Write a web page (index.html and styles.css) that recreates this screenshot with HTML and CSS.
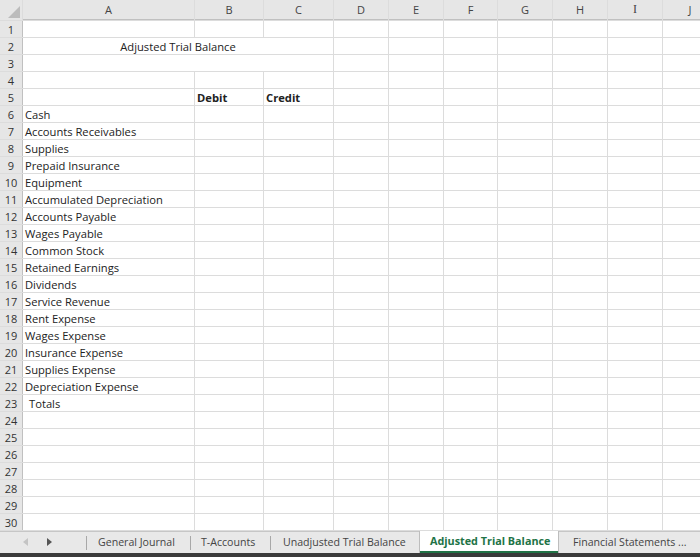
FILE: index.html
```html
<!DOCTYPE html>
<html>
<head>
<meta charset="utf-8">
<link rel="stylesheet" href="styles.css">
</head>
<body>
<div class="app">
  <div class="sheet">
    <div class="corner"><svg width="12" height="12" viewBox="0 0 12 12"><polygon points="12,0 12,12 0,12" fill="#bcbcbc"/></svg></div>
    <div class="ch">A</div><div class="ch">B</div><div class="ch">C</div><div class="ch">D</div><div class="ch">E</div><div class="ch">F</div><div class="ch">G</div><div class="ch">H</div><div class="ch ci">I</div><div class="ch">J</div>

    <div class="rn">1</div><i></i><i></i><i></i><i></i><i></i><i></i><i></i><i></i><i></i><i></i>
    <div class="rn">2</div><div class="c merge title">Adjusted Trial Balance</div><i></i><i></i><i></i><i></i><i></i><i></i><i></i>
    <div class="rn">3</div><div class="c merge"></div><i></i><i></i><i></i><i></i><i></i><i></i><i></i>
    <div class="rn">4</div><i></i><i></i><i></i><i></i><i></i><i></i><i></i><i></i><i></i><i></i>
    <div class="rn">5</div><i></i><div class="c bold">Debit</div><div class="c bold">Credit</div><i></i><i></i><i></i><i></i><i></i><i></i><i></i>
    <div class="rn">6</div><div class="c">Cash</div><i></i><i></i><i></i><i></i><i></i><i></i><i></i><i></i><i></i>
    <div class="rn">7</div><div class="c">Accounts Receivables</div><i></i><i></i><i></i><i></i><i></i><i></i><i></i><i></i><i></i>
    <div class="rn">8</div><div class="c">Supplies</div><i></i><i></i><i></i><i></i><i></i><i></i><i></i><i></i><i></i>
    <div class="rn">9</div><div class="c">Prepaid Insurance</div><i></i><i></i><i></i><i></i><i></i><i></i><i></i><i></i><i></i>
    <div class="rn">10</div><div class="c">Equipment</div><i></i><i></i><i></i><i></i><i></i><i></i><i></i><i></i><i></i>
    <div class="rn">11</div><div class="c">Accumulated Depreciation</div><i></i><i></i><i></i><i></i><i></i><i></i><i></i><i></i><i></i>
    <div class="rn">12</div><div class="c">Accounts Payable</div><i></i><i></i><i></i><i></i><i></i><i></i><i></i><i></i><i></i>
    <div class="rn">13</div><div class="c">Wages Payable</div><i></i><i></i><i></i><i></i><i></i><i></i><i></i><i></i><i></i>
    <div class="rn">14</div><div class="c">Common Stock</div><i></i><i></i><i></i><i></i><i></i><i></i><i></i><i></i><i></i>
    <div class="rn">15</div><div class="c">Retained Earnings</div><i></i><i></i><i></i><i></i><i></i><i></i><i></i><i></i><i></i>
    <div class="rn">16</div><div class="c">Dividends</div><i></i><i></i><i></i><i></i><i></i><i></i><i></i><i></i><i></i>
    <div class="rn">17</div><div class="c">Service Revenue</div><i></i><i></i><i></i><i></i><i></i><i></i><i></i><i></i><i></i>
    <div class="rn">18</div><div class="c">Rent Expense</div><i></i><i></i><i></i><i></i><i></i><i></i><i></i><i></i><i></i>
    <div class="rn">19</div><div class="c">Wages Expense</div><i></i><i></i><i></i><i></i><i></i><i></i><i></i><i></i><i></i>
    <div class="rn">20</div><div class="c">Insurance Expense</div><i></i><i></i><i></i><i></i><i></i><i></i><i></i><i></i><i></i>
    <div class="rn">21</div><div class="c">Supplies Expense</div><i></i><i></i><i></i><i></i><i></i><i></i><i></i><i></i><i></i>
    <div class="rn">22</div><div class="c">Depreciation Expense</div><i></i><i></i><i></i><i></i><i></i><i></i><i></i><i></i><i></i>
    <div class="rn">23</div><div class="c indent">Totals</div><i></i><i></i><i></i><i></i><i></i><i></i><i></i><i></i><i></i>
    <div class="rn">24</div><i></i><i></i><i></i><i></i><i></i><i></i><i></i><i></i><i></i><i></i>
    <div class="rn">25</div><i></i><i></i><i></i><i></i><i></i><i></i><i></i><i></i><i></i><i></i>
    <div class="rn">26</div><i></i><i></i><i></i><i></i><i></i><i></i><i></i><i></i><i></i><i></i>
    <div class="rn">27</div><i></i><i></i><i></i><i></i><i></i><i></i><i></i><i></i><i></i><i></i>
    <div class="rn">28</div><i></i><i></i><i></i><i></i><i></i><i></i><i></i><i></i><i></i><i></i>
    <div class="rn">29</div><i></i><i></i><i></i><i></i><i></i><i></i><i></i><i></i><i></i><i></i>
    <div class="rn">30</div><i></i><i></i><i></i><i></i><i></i><i></i><i></i><i></i><i></i><i></i>
  </div>
  <div class="tabbar">
    <div class="nav">
      <svg class="arr" width="5" height="8" viewBox="0 0 5 8"><polygon points="5,0 5,8 0,4" fill="#c4c4c4"/></svg>
      <svg class="arr" width="5" height="8" viewBox="0 0 5 8"><polygon points="0,0 0,8 5,4" fill="#555"/></svg>
    </div>
    <div class="tab t1">General Journal</div>
    <div class="tab t2">T-Accounts</div>
    <div class="tab t3">Unadjusted Trial Balance</div>
    <div class="tab active">Adjusted Trial Balance</div>
    <div class="tab last">Financial Statements ...</div>
  </div>
</div>
</body>
</html>
```
FILE: styles.css
```css
html, body {
  margin: 0;
  padding: 0;
  background: #fff;
}
body {
  width: 700px;
  height: 557px;
  overflow: hidden;
  font-family: "Open Sans", "Liberation Sans", sans-serif;
  font-size: 11.2px;
  color: #222;
}
.app {
  display: flex;
  flex-direction: column;
  height: 557px;
}
.sheet {
  height: 531px;
  overflow: hidden;
  display: grid;
  grid-template-columns: 22px 171px 68px 69px 54px 54px 53px 54px 54px 54px 54px;
  grid-auto-rows: 16px;
  grid-template-rows: 20px;
  gap: 1px;
  background: #dcdcdc;
  width: 730px;
  flex: none;
}
.sheet i, .sheet .c {
  background: #fff;
}
.corner {
  background: #e6e6e6;
  display: flex;
  align-items: flex-end;
  justify-content: flex-end;
  padding: 0 2px 2px 0;
  box-sizing: border-box;
}
.ch {
  background: #e6e6e6;
  color: #444;
  font-size: 11px;
  display: flex;
  align-items: center;
  justify-content: center;
  border-bottom: 1px solid #c0c0c0;
}
.ci {
  font-family: "Liberation Serif", serif;
  font-size: 12px;
}
.rn {
  background: #e6e6e6;
  color: #333;
  font-size: 11px;
  display: flex;
  align-items: center;
  justify-content: center;
  padding-top: 1px;
  box-sizing: border-box;
  border-right: 1px solid #c0c0c0;
  margin-right: -1px;
}
.c {
  padding-left: 2px;
  line-height: 18px;
  white-space: nowrap;
  overflow: hidden;
}
.merge {
  grid-column: span 3;
}
.title {
  text-align: center;
  padding-left: 0;
}
.bold {
  font-weight: 700;
}
.indent {
  padding-left: 6px;
}
.tabbar {
  flex: 1;
  background: #e8e8e8;
  border-top: 1px solid #c6c6c6;
  border-bottom: 4px solid #3a3a3a;
  display: flex;
  align-items: stretch;
  font-size: 10.6px;
  color: #444;
  box-sizing: border-box;
}
.nav {
  width: 86px;
  display: flex;
  align-items: center;
  gap: 19px;
  padding-left: 23px;
  padding-bottom: 2px;
  box-sizing: border-box;
}
.tab {
  display: flex;
  align-items: center;
  position: relative;
  white-space: nowrap;
  padding-bottom: 2px;
}
.tab::before {
  content: "";
  position: absolute;
  left: 0;
  top: 4px;
  bottom: 3px;
  width: 1px;
  background: #a8a8a8;
}
.t1 { width: 104px; padding-left: 12px; box-sizing: border-box; }
.t2 { width: 80px; padding-left: 11px; box-sizing: border-box; }
.t3 { width: 150px; padding-left: 13px; box-sizing: border-box; }
.active {
  width: 138px;
  padding-left: 10px;
  box-sizing: border-box;
  background: #fff;
  color: #217346;
  font-weight: 700;
  font-size: 10.8px;
  margin-top: -1px;
  padding-bottom: 1px;
  border-bottom: 2px solid #217346;
  box-shadow: 1px 0 0 #bdbdbd, -1px 0 0 #bdbdbd;
}
.active::before, .last::before { display: none; }
.last {
  padding-left: 15px;
  flex: 1;
}
```
